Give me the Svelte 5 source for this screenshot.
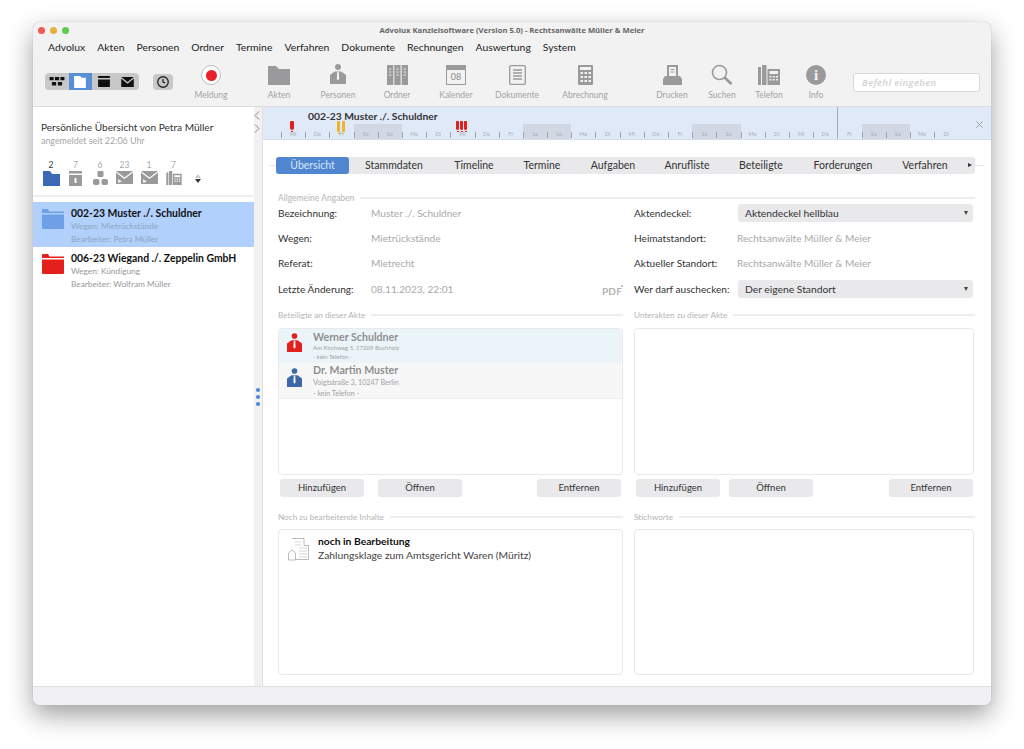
<script>
  const menu = ['Advolux', 'Akten', 'Personen', 'Ordner', 'Termine', 'Verfahren', 'Dokumente', 'Rechnungen', 'Auswertung', 'System'];
  const tabs = [
    { label: 'Übersicht', width: 73 },
    { label: 'Stammdaten', width: 90 },
    { label: 'Timeline', width: 70 },
    { label: 'Termine', width: 66 },
    { label: 'Aufgaben', width: 76 },
    { label: 'Anrufliste', width: 72 },
    { label: 'Beteiligte', width: 76 },
    { label: 'Forderungen', width: 88 },
    { label: 'Verfahren', width: 76 }
  ];
  const days = ['Mi', 'Do', 'Fr', 'Sa', 'So', 'Mo', 'Di', 'Mi', 'Do', 'Fr', 'Sa', 'So', 'Mo', 'Di', 'Mi', 'Do', 'Fr', 'Sa', 'So', 'Mo', 'Di', 'Mi', 'Do', 'Fr', 'Sa', 'So', 'Mo', 'Di'];
  const counts = ['2', '7', '6', '23', '1', '7'];
  const files = [
    { title: '002-23 Muster ./. Schuldner', wegen: 'Wegen: Mietrückstände', by: 'Bearbeiter: Petra Müller', color: '#6f9fe6', active: true },
    { title: '006-23 Wiegand ./. Zeppelin GmbH', wegen: 'Wegen: Kündigung', by: 'Bearbeiter: Wolfram Müller', color: '#e3201b', active: false }
  ];
</script>

<div class="page">
  <div class="window">
    <div class="titlebar">
      <div class="lights"><i class="red"></i><i class="yellow"></i><i class="green"></i></div>
      <span class="title">Advolux Kanzleisoftware (Version 5.0) - Rechtsanwälte Müller &amp; Meier</span>
    </div>
    <nav class="menu">
      {#each menu as m}<span>{m}</span>{/each}
    </nav>

    <div class="toolbar">
      <div class="segments">
        <span class="seg">
          <svg width="18" height="14" viewBox="0 0 18 14"><path fill="#111" d="M0 1h5v4H0zM6.500 1h5v4h-5zM13 1h5v4h-5zM3 7h5v4H3zM10 7h5v4h-5z"/></svg>
        </span>
        <span class="seg on">
          <svg width="14" height="15" viewBox="0 0 14 15"><path fill="#fff" d="M0 1h7l2 2h5v12H0z"/></svg>
        </span>
        <span class="seg">
          <svg width="14" height="13" viewBox="0 0 14 13"><path fill="#111" d="M0 0h14v2.500H0zM0 4h14v9H0z"/></svg>
        </span>
        <span class="seg">
          <svg width="15" height="12" viewBox="0 0 15 12"><path fill="#111" d="M0 0h15L7.500 6zM0 2l7.500 6L15 2v10H0z"/></svg>
        </span>
      </div>
      <span class="clock">
        <svg width="14" height="14" viewBox="0 0 16 16" fill="none" stroke="#222" stroke-width="1.500"><circle cx="8" cy="8" r="6"/><path d="M8 4.500V8l2.500 1"/></svg>
      </span>
      <div class="tool meldung">
        <span class="rec"><i></i></span>
        <small>Meldung</small>
      </div>
      <div class="tool t-akten">
        <svg width="22" height="19" viewBox="0 0 22 19"><path fill="#9a9a9c" d="M0 0h8l3 3h11v16H0z"/></svg>
        <small>Akten</small>
      </div>
      <div class="tool t-personen">
        <svg width="16" height="21" viewBox="0 0 16 21"><circle cx="8" cy="3" r="3" fill="#9a9a9c"/><path fill="#9a9a9c" d="M5 7.500h6l1 .5 4 3v9H0v-9l4-3zM7.200 8l-.4 7 1.200 1.500L9.200 15l-.4-7z"/></svg>
        <small>Personen</small>
      </div>
      <div class="tool t-ordner">
        <svg width="21" height="20" viewBox="0 0 21 20"><path fill="#9a9a9c" d="M0 0h6.300v20H0zM7.300 0h6.300v20H7.300zM14.700 0H21v20h-6.300z"/><path stroke="#ececec" stroke-width="1" d="M2 4h2.300M2 7h2.300M2 10h2.300M9.300 4h2.300M9.300 7h2.300M9.300 10h2.300M16.700 4H19M16.700 7H19M16.700 10H19"/></svg>
        <small>Ordner</small>
      </div>
      <div class="tool t-kalender">
        <span class="cal"><i></i><b>08</b></span>
        <small>Kalender</small>
      </div>
      <div class="tool t-dokumente">
        <svg width="17" height="20" viewBox="0 0 17 20" fill="none" stroke="#9a9a9c" stroke-width="1.300"><rect x=".7" y=".7" width="15.600" height="18.600" rx="1"/><path d="M4 5h9M4 8h9M4 11h9M4 14h9"/></svg>
        <small>Dokumente</small>
      </div>
      <div class="tool t-abrechnung">
        <svg width="15" height="20" viewBox="0 0 15 20"><path fill="#9a9a9c" fill-rule="evenodd" d="M1 0h13a1 1 0 0 1 1 1v18a1 1 0 0 1-1 1H1a1 1 0 0 1-1-1V1a1 1 0 0 1 1-1zM2 2v3h11V2zM2.500 7v2H5V7zm4 0v2H9V7zm4 0v2H13V7zm-8 4v2H5v-2zm4 0v2H9v-2zm4 0v2H13v-2zm-8 4v2H5v-2zm4 0v2H9v-2zm4 0v2H13v-2z"/></svg>
        <small>Abrechnung</small>
      </div>
      <div class="tool t-drucken">
        <svg width="19" height="20" viewBox="0 0 19 20"><path fill="#9a9a9c" fill-rule="evenodd" d="M4 0h11v11h2l2 3v6H0v-6l2-3h2zM6 2v9h7V2zM7.500 4h4v1h-4zM7.500 6.500h4v1h-4z"/></svg>
        <small>Drucken</small>
      </div>
      <div class="tool t-suchen">
        <svg width="22" height="21" viewBox="0 0 22 21" fill="none" stroke="#9a9a9c"><circle cx="8.500" cy="8.500" r="7" stroke-width="1.600"/><path d="M13.500 13.500l7 6.500" stroke-width="2.800"/></svg>
        <small>Suchen</small>
      </div>
      <div class="tool t-telefon">
        <svg width="22" height="20" viewBox="0 0 22 20"><path fill="#9a9a9c" fill-rule="evenodd" d="M0 2h3v18H0zM4 0h4.500v20H4zM9.500 4H22v16H9.500zM11.500 6v3h8.500V6zm0 5v1.500h2V11zm3.300 0v1.500h2V11zm3.200 0v1.500h2V11zm-6.500 3v1.500h2V14zm3.300 0v1.500h2V14zm3.200 0v1.500h2V14z"/></svg>
        <small>Telefon</small>
      </div>
      <div class="tool t-info">
        <span class="info">i</span>
        <small>Info</small>
      </div>
      <div class="command">Befehl eingeben</div>
    </div>

    <div class="body">
      <aside class="side">
        <div class="greeting">
          <p>Persönliche Übersicht von Petra Müller</p>
          <small>angemeldet seit 22:06 Uhr</small>
        </div>
        <div class="counters">
          {#each counts as c, i}
            <div class="counter" class:current={i === 0}>
              <span>{c}</span>
              {#if i === 0}
                <svg width="17" height="15" viewBox="0 0 17 15"><path fill="#3c69b5" d="M0 0h7l2 3h8v12H0z"/></svg>
              {:else if i === 1}
                <svg width="13" height="15" viewBox="0 0 13 15"><path fill="#9a9a9c" fill-rule="evenodd" d="M0 0h13v2.500H0zM0 4h13v11H0zM5.500 7v5h2V7z"/></svg>
              {:else if i === 2}
                <svg width="15" height="14" viewBox="0 0 15 14"><rect x="4.500" width="6" height="6" rx="1.200" fill="#9a9a9c"/><rect y="8" width="6.500" height="6" rx="2" fill="#9a9a9c"/><rect x="8.500" y="8" width="6.500" height="6" rx="2" fill="#9a9a9c"/></svg>
              {:else if i === 3 || i === 4}
                <svg width="17" height="13" viewBox="0 0 17 13"><path fill="#9a9a9c" d="M0 0h17L8.500 6.500zM0 1.500l8.500 6.500L17 1.500V13H0z"/><path fill="#eee" d="M2 8l4 2.500L2 12z"/></svg>
              {:else}
                <svg width="16" height="14" viewBox="0 0 22 20"><path fill="#9a9a9c" fill-rule="evenodd" d="M0 2h3v18H0zM4 0h4.500v20H4zM9.500 4H22v16H9.500zM11.500 6v3h8.500V6zm0 5v1.500h2V11zm3.300 0v1.500h2V11zm3.200 0v1.500h2V11zm-6.500 3v1.500h2V14zm3.300 0v1.500h2V14zm3.200 0v1.500h2V14z"/></svg>
              {/if}
            </div>
          {/each}
          <div class="sorter">
            <i class="up"></i><i class="down"></i>
          </div>
        </div>
        <div class="files">
          {#each files as f}
            <div class="file" class:active={f.active}>
              <svg width="22" height="20" viewBox="0 0 22 20"><path fill={f.color} d="M0 1q0-1 1-1h5l1.500 2.500H22v1.500H0zM0 5.500h22V19q0 1-1 1H1q-1 0-1-1z"/></svg>
              <div class="file-text">
                <strong>{f.title}</strong>
                <small>{f.wegen}</small>
                <small>{f.by}</small>
              </div>
            </div>
          {/each}
        </div>
      </aside>

      <div class="splitter">
        <div class="chev">
          <svg width="6" height="9" viewBox="0 0 6 9" fill="none" stroke="#888"><path d="M5 .5l-4 4 4 4"/></svg>
          <svg width="6" height="9" viewBox="0 0 6 9" fill="none" stroke="#888"><path d="M1 .5l4 4-4 4"/></svg>
        </div>
        <div class="dots"><i></i><i></i><i></i></div>
      </div>

      <main class="main">
        <header class="timeline">
          <h2>002-23 Muster ./. Schuldner</h2>
          <div class="days">
            {#each days as d}
              <span class="day" class:weekend={d === 'Sa' || d === 'So'}>{d}</span>
            {/each}
            <em class="flag red-flag one"></em>
            <em class="flag amber a2"></em>
            <em class="flag amber a3"></em>
            <em class="flag red-flag b1"></em>
            <em class="flag red-flag b2"></em>
            <em class="flag red-flag b3"></em>
          </div>
          <i class="now"></i>
          <svg class="close" width="7" height="7" viewBox="0 0 7 7" fill="none" stroke="#9a9fa6" stroke-width="1"><path d="M.3.3l6.400 6.400M6.700.3L.3 6.700"/></svg>
        </header>

        <div class="content">
          <div class="tabs">
            {#each tabs as t, i}
              <span class="tab" class:sel={i === 0} style:width="{t.width}px">{t.label}</span>
            {/each}
            <span class="more"></span>
          </div>

          <h3 class="legend first">Allgemeine Angaben</h3>
          <div class="general">
            <div class="col left">
              <div class="row"><label>Bezeichnung:</label><span>Muster ./. Schuldner</span></div>
              <div class="row"><label>Wegen:</label><span>Mietrückstände</span></div>
              <div class="row"><label>Referat:</label><span>Mietrecht</span></div>
              <div class="row"><label>Letzte Änderung:</label><span>08.11.2023, 22:01</span><b class="pdf">PDF</b></div>
            </div>
            <div class="col right">
              <div class="row"><label>Aktendeckel:</label><div class="select">Aktendeckel hellblau</div></div>
              <div class="row"><label>Heimatstandort:</label><span>Rechtsanwälte Müller &amp; Meier</span></div>
              <div class="row"><label>Aktueller Standort:</label><span>Rechtsanwälte Müller &amp; Meier</span></div>
              <div class="row"><label>Wer darf auschecken:</label><div class="select">Der eigene Standort</div></div>
            </div>
          </div>

          <div class="pair middle">
            <section>
              <h3 class="legend">Beteiligte an dieser Akte</h3>
              <div class="box list">
                <div class="person hi">
                  <svg width="15" height="20" viewBox="0 0 16 21"><circle cx="8" cy="3" r="3" fill="#e3201b"/><path fill="#e3201b" d="M5 7.500h6l1 .5 4 3v9H0v-9l4-3zM7.200 8l-.4 7 1.200 1.500L9.200 15l-.4-7z"/></svg>
                  <div>
                    <strong>Werner Schuldner</strong>
                    <small class="tiny">Am Kirchweg 5, 17209 Buchholz</small>
                    <small class="tiny">- kein Telefon -</small>
                  </div>
                </div>
                <div class="person alt">
                  <svg width="15" height="20" viewBox="0 0 16 21"><circle cx="8" cy="3" r="3" fill="#3c69a8"/><path fill="#3c69a8" d="M5 7.500h6l1 .5 4 3v9H0v-9l4-3zM7.200 8l-.4 7 1.200 1.500L9.200 15l-.4-7z"/></svg>
                  <div>
                    <strong>Dr. Martin Muster</strong>
                    <small>Voigtstraße 3, 10247 Berlin</small>
                    <small>- kein Telefon -</small>
                  </div>
                </div>
              </div>
              <div class="buttons"><button>Hinzufügen</button><button>Öffnen</button><button class="push">Entfernen</button></div>
            </section>
            <section>
              <h3 class="legend">Unterakten zu dieser Akte</h3>
              <div class="box list"></div>
              <div class="buttons narrow"><button>Hinzufügen</button><button>Öffnen</button><button class="push">Entfernen</button></div>
            </section>
          </div>

          <div class="pair bottom">
            <section>
              <h3 class="legend">Noch zu bearbeitende Inhalte</h3>
              <div class="box notes">
                <svg width="21" height="23" viewBox="0 0 21 23" fill="#fff" stroke="#aaa" stroke-width=".8"><path d="M4 .5h12v7h4.500v14H6"/><path d="M.5 15l3.500-3 3.500 3v7h-7z"/><path d="M7 4h6M7 7h6M11 10h8M11 13h8M11 16h8M11 19h8" stroke="#ccc"/></svg>
                <div class="note-text">
                  <strong>noch in Bearbeitung</strong>
                  <p>Zahlungsklage zum Amtsgericht Waren (Müritz)</p>
                </div>
              </div>
            </section>
            <section>
              <h3 class="legend">Stichworte</h3>
              <div class="box notes"></div>
            </section>
          </div>
        </div>
      </main>
    </div>
    <div class="statusbar"></div>
  </div>
</div>

<style>
  :global(body) {
    margin: 0;
    background: #fff;
  }
  .page {
    width: 1024px;
    height: 749px;
    padding: 22px 33px 0;
    box-sizing: border-box;
    overflow: hidden;
    font-family: Lato, "Noto Sans", sans-serif;
    color: #222;
  }
  .window {
    width: 958px;
    height: 683px;
    background: #f2f2f3;
    border-radius: 7px;
    box-shadow: 0 0 1px #aaa, 0 10px 26px rgba(0, 0, 0, 0.38);
    display: flex;
    flex-direction: column;
    overflow: hidden;
  }
  .titlebar {
    height: 16px;
    flex: none;
    display: flex;
    align-items: center;
    justify-content: center;
    position: relative;
  }
  .title {
    font-size: 7.650px;
    font-weight: 700;
    color: #666;
    font-family: "Open Sans", sans-serif;
  }
  .lights {
    position: absolute;
    left: 5px;
    top: 5px;
    display: flex;
    gap: 5px;
  }
  .lights i {
    width: 7px;
    height: 7px;
    border-radius: 50%;
  }
  .red { background: #ed5a52; }
  .yellow { background: #e5b13c; }
  .green { background: #5fcb4e; }

  .menu {
    height: 17px;
    flex: none;
    display: flex;
    gap: 12px;
    padding-left: 15px;
    align-items: center;
    font-size: 10.400px;
    color: #222;
  }

  .toolbar {
    height: 51px;
    flex: none;
    display: flex;
    position: relative;
    border-bottom: 1px solid #dcdcde;
    box-sizing: content-box;
  }
  .segments {
    position: absolute;
    left: 12px;
    top: 18px;
    display: flex;
    background: #c8c8ca;
    border-radius: 4px;
    height: 17px;
    overflow: hidden;
  }
  .seg {
    width: 23.500px;
    display: flex;
    align-items: center;
    justify-content: center;
  }
  .seg svg { transform: scale(0.85); }
  .seg.on { background: #5a8fd8; }
  .clock {
    position: absolute;
    left: 120px;
    top: 19px;
    width: 20px;
    height: 16px;
    background: #c8c8ca;
    border-radius: 4px;
    display: flex;
    align-items: center;
    justify-content: center;
  }
  .tool {
    position: absolute;
    top: 4px;
    width: 70px;
    height: 42px;
    display: flex;
    flex-direction: column;
    align-items: center;
    justify-content: flex-end;
    gap: 5px;
  }
  .tool small {
    font-size: 8.500px;
    color: #a2a2a4;
    line-height: 11px;
  }
  .meldung { left: 143px; }
  .t-akten { left: 211px; }
  .t-personen { left: 270px; }
  .t-ordner { left: 329px; }
  .t-kalender { left: 388px; }
  .t-dokumente { left: 449px; }
  .t-abrechnung { left: 517px; }
  .t-drucken { left: 604px; }
  .t-suchen { left: 654px; }
  .t-telefon { left: 701px; }
  .t-info { left: 748px; }
  .rec {
    width: 20px;
    height: 20px;
    border-radius: 50%;
    background: #fff;
    border: 1px solid #bbb;
    box-sizing: border-box;
    display: flex;
    align-items: center;
    justify-content: center;
  }
  .rec i {
    width: 11px;
    height: 11px;
    border-radius: 50%;
    background: #e8202a;
  }
  .cal {
    width: 20px;
    height: 20px;
    border: 1px solid #9a9a9c;
    box-sizing: border-box;
    display: flex;
    flex-direction: column;
    align-items: center;
  }
  .cal i {
    width: 100%;
    height: 4px;
    background: #9a9a9c;
  }
  .cal b {
    font-size: 9px;
    font-weight: 400;
    color: #8a8a8c;
    line-height: 13px;
  }
  .info {
    width: 20px;
    height: 20px;
    border-radius: 50%;
    background: #9a9a9c;
    color: #f2f2f3;
    font: 700 15px/20px "Liberation Serif", serif;
    text-align: center;
  }
  .command {
    position: absolute;
    left: 820px;
    top: 18px;
    width: 127px;
    height: 19px;
    box-sizing: border-box;
    background: #fff;
    border: 1px solid #d8d8da;
    border-radius: 3px;
    padding: 0 8px;
    font-size: 9.500px;
    line-height: 17px;
    font-style: italic;
    color: #d2d2d4;
    font-family: "Open Sans", sans-serif;
    font-weight: 600;
    letter-spacing: 0.35px;
  }

  .body {
    flex: 1;
    display: flex;
    min-height: 0;
  }
  .side {
    width: 221px;
    flex: none;
    background: #fff;
  }
  .greeting {
    padding: 13px 8px 0;
    height: 33px;
  }
  .greeting p {
    margin: 0;
    font-size: 10.100px;
    line-height: 14px;
    color: #333;
  }
  .greeting small {
    display: block;
    font-size: 8.900px;
    line-height: 14px;
    color: #a5a5a7;
  }
  .counters {
    display: flex;
    gap: 8.500px;
    padding: 7px 0 0 10px;
    height: 35px;
    border-bottom: 2px solid #efeff0;
    margin-bottom: 5px;
  }
  .counter {
    width: 16px;
    display: flex;
    flex-direction: column;
    align-items: center;
    gap: 0;
  }
  .counter span {
    font-size: 8.500px;
    line-height: 10px;
    color: #a8a8aa;
    margin-bottom: 1px;
  }
  .counter.current span { color: #333; }
  .sorter {
    display: flex;
    flex-direction: column;
    gap: 1px;
    padding: 14px 0 0 5px;
  }
  .sorter i {
    width: 0;
    height: 0;
    border-left: 3.500px solid transparent;
    border-right: 3.500px solid transparent;
  }
  .sorter .up { border-bottom: 4px solid #ccc; }
  .sorter .down { border-top: 4px solid #333; }

  .file {
    display: flex;
    gap: 6px;
    padding: 5px 9px 4px;
    height: 36px;
  }
  .file.active { background: #b1d0fb; }
  .file svg { margin-top: 2px; flex: none; }
  .file-text {
    display: flex;
    flex-direction: column;
    margin-left: 1px;
  }
  .file-text strong {
    font-size: 10.400px;
    line-height: 13px;
    color: #111;
    white-space: nowrap;
  }
  .file-text small {
    font-size: 8.300px;
    line-height: 12.500px;
    color: #999;
  }
  .file.active small { color: #8fa5c2; }

  .splitter {
    width: 8px;
    flex: none;
    background: #f1f1f2;
    border-right: 1px solid #dfdfe1;
    position: relative;
  }
  .chev {
    position: absolute;
    top: 4px;
    left: 0;
    display: flex;
    flex-direction: column;
    gap: 4px;
  }
  .chev svg { display: block; }
  .dots {
    position: absolute;
    top: 281px;
    left: 2px;
    display: flex;
    flex-direction: column;
    gap: 3px;
  }
  .dots i {
    width: 4px;
    height: 4px;
    border-radius: 50%;
    background: #4a86d8;
  }

  .main {
    flex: 1;
    background: #fff;
    display: flex;
    flex-direction: column;
    min-width: 0;
  }
  .timeline {
    height: 33px;
    flex: none;
    background: #e0e9f8;
    position: relative;
    border-bottom: 1px solid #d6deec;
    box-sizing: border-box;
  }
  .timeline h2 {
    margin: 0;
    position: absolute;
    left: 45px;
    top: 2px;
    font-size: 10.300px;
    line-height: 14px;
    font-weight: 700;
    color: #333;
  }
  .days {
    position: absolute;
    left: 18px;
    bottom: 0;
    height: 15px;
    display: flex;
  }
  .day {
    width: 24.200px;
    height: 15px;
    box-sizing: border-box;
    font-size: 5.500px;
    color: #a8adb6;
    text-align: center;
    line-height: 20px;
    position: relative;
  }
  .day::before {
    content: "";
    position: absolute;
    left: 0;
    bottom: 1px;
    height: 6px;
    width: 1px;
    background: #9ea3ab;
  }
  .day.weekend { background: #d2d8e3; }
  .flag {
    position: absolute;
    width: 3px;
    height: 9px;
    border-radius: 1px 1px 2px 2px;
    top: -3px;
  }
  .flag::after {
    content: "";
    position: absolute;
    left: 0.500px;
    bottom: -2px;
    width: 2px;
    height: 1px;
    background: inherit;
  }
  .red-flag { background: #e0211d; }
  .amber { background: #eeb32d; }
  .one { left: 9px; width: 4px; }
  .a2 { left: 56px; height: 11px; }
  .a3 { left: 60.500px; height: 11px; }
  .b1 { left: 175px; }
  .b2 { left: 179px; }
  .b3 { left: 183px; }
  .now {
    position: absolute;
    left: 574px;
    top: 0;
    bottom: 0;
    width: 1px;
    background: #a5adba;
  }
  .close {
    position: absolute;
    right: 8px;
    top: 14px;
  }
  .content {
    flex: 1;
    padding: 17px 16px 0 15px;
    display: flex;
    flex-direction: column;
    min-height: 0;
    position: relative;
  }
  .tabs {
    display: flex;
    height: 17px;
    background: #e9e9eb;
    border-radius: 3px;
    margin-left: -2px;
    position: relative;
    font-size: 10.500px;
    line-height: 17px;
    color: #333;
  }
  .tabs::before,
  .tabs::after {
    content: "";
    position: absolute;
    top: 8px;
    height: 1px;
    background: #e6e6e8;
  }
  .tabs::before { left: -7px; width: 7px; }
  .tabs::after { left: 100%; width: 9px; }
  .tab {
    white-space: nowrap;
    flex: none;
    text-align: center;
  }
  .tab.sel {
    background: #4f86cf;
    color: #d9e6f7;
    border-radius: 3px;
  }
  .more {
    position: absolute;
    right: 3px;
    top: 6px;
    width: 0;
    height: 0;
    border-left: 4px solid #333;
    border-top: 2.500px solid transparent;
    border-bottom: 2.500px solid transparent;
  }
  .legend {
    margin: 0;
    font-size: 8.200px;
    font-weight: 400;
    color: #b4b4b6;
    display: flex;
    align-items: center;
    gap: 6px;
    line-height: 10px;
    white-space: nowrap;
  }
  .legend::after {
    content: "";
    flex: 1;
    height: 2px;
    background: #ecedee;
  }
  .legend.first { margin-top: 19px; font-size: 8.500px; }
  .general {
    display: grid;
    grid-template-columns: 356px 341px;
    margin-top: -3px;
  }
  .row {
    display: flex;
    align-items: center;
    height: 25.300px;
    font-size: 10.100px;
    position: relative;
  }
  .row label {
    width: 93px;
    flex: none;
    color: #333;
  }
  .row span { color: #a9a9ab; }
  .right .row label { width: 104px; }
  .right .row span { margin-left: -1px; }
  .select {
    flex: 1;
    height: 18px;
    line-height: 18px;
    background: #e9e9ec;
    border-radius: 3px;
    padding-left: 7px;
    margin-right: 2px;
    color: #333;
    font-size: 10.300px;
    position: relative;
  }
  .select::after {
    content: "";
    position: absolute;
    right: 5px;
    top: 7px;
    border-top: 4px solid #444;
    border-left: 2.500px solid transparent;
    border-right: 2.500px solid transparent;
  }
  .pdf {
    position: absolute;
    right: 12px;
    top: 9px;
    font-size: 10px;
    color: #b2b2b4;
    font-weight: 700;
    letter-spacing: 0.2px;
  }
  .pdf::after {
    content: "";
    position: absolute;
    right: -1px;
    top: 0;
    width: 2px;
    height: 2px;
    border-radius: 50%;
    background: #b2b2b4;
  }
  .pair {
    display: grid;
    grid-template-columns: 345px 341px;
    gap: 11px;
  }
  .middle { margin-top: 9px; }
  .bottom { margin-top: 15px; flex: 1; min-height: 0; }
  section { min-width: 0; display: flex; flex-direction: column; }
  .box {
    border: 1px solid #e9e9ea;
    border-radius: 4px;
    box-sizing: border-box;
    margin: 8px 0 0;
    overflow: hidden;
  }
  section:last-child .box { margin-right: 1px; }
  .list { height: 147px; }
  .person {
    display: flex;
    gap: 11px;
    height: 33.500px;
    padding: 3px 0 0 8px;
    box-sizing: border-box;
  }
  .person.hi { background: #ebf4f9; }
  .person.alt {
    background: #f7f7f8;
    border-bottom: 1px solid #eee;
    height: 36px;
    padding-top: 2px;
  }
  .person svg { margin-top: 1px; flex: none; }
  .person.alt svg { margin-top: 3px; }
  .person strong {
    display: block;
    font-size: 10.600px;
    line-height: 11px;
    font-weight: 700;
    color: #8f8f91;
  }
  .person.alt strong { margin-bottom: 1.500px; }
  .person small {
    display: block;
    font-size: 7.100px;
    line-height: 11px;
    color: #a2a2a4;
  }
  .person small.tiny {
    font-size: 6px;
    line-height: 9px;
    color: #a2a2a4;
  }
  .buttons {
    display: flex;
    gap: 14px;
    padding: 4px 2px 0;
  }
  .buttons.narrow { gap: 9px; }
  button {
    width: 84px;
    height: 18px;
    border: 0;
    padding: 0;
    background: #e9e9eb;
    border-radius: 3px;
    font: 400 9.500px/18px Lato, "Noto Sans", sans-serif;
    color: #333;
  }
  .push { margin-left: auto; }
  .bottom .box {
    flex: 1;
    margin-top: 7px;
    margin-bottom: 11px;
  }
  .notes {
    display: flex;
    gap: 9px;
    padding: 8px 0 0 9px;
  }
  .notes svg { flex: none; }
  .note-text { margin-top: -3px; }
  .notes strong {
    font-size: 10.300px;
    line-height: 13px;
    display: block;
    color: #111;
  }
  .notes p {
    margin: 1px 0 0;
    font-size: 10.300px;
    line-height: 13px;
    color: #444;
  }
  .statusbar {
    height: 18px;
    flex: none;
    background: #f1f1f3;
    border-top: 1px solid #dfdfe1;
  }
</style>
